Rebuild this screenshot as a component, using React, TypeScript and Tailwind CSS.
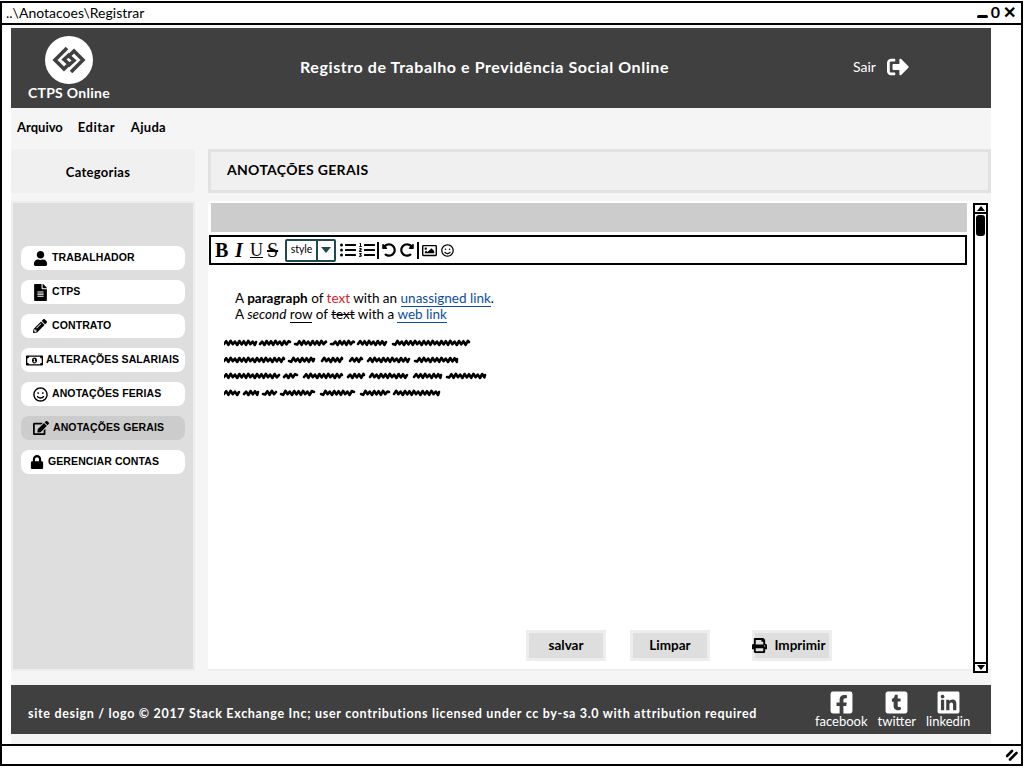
import {
  FaEdit,
  FaFacebookSquare,
  FaFileAlt,
  FaLinkedin,
  FaListOl,
  FaListUl,
  FaLock,
  FaPencilAlt,
  FaPrint,
  FaRedoAlt,
  FaRegImage,
  FaRegMoneyBillAlt,
  FaRegSmile,
  FaSignOutAlt,
  FaTumblrSquare,
  FaUndoAlt,
  FaUser,
} from "react-icons/fa";
import type { ReactNode } from "react";

const UI_FONT = "font-['Lato','Noto_Sans',sans-serif]";

const NAV_ITEMS: { label: string; icon: ReactNode; gap: string; pl: string; active?: boolean }[] = [
  { label: "TRABALHADOR", icon: <FaUser size={15} />, gap: "gap-[4px]", pl: "pl-[12px]" },
  { label: "CTPS", icon: <FaFileAlt size={17} />, gap: "gap-[3px]", pl: "pl-[11px]" },
  { label: "CONTRATO", icon: <FaPencilAlt size={14} />, gap: "gap-[5px]", pl: "pl-[12px]" },
  { label: "ALTERAÇÕES SALARIAIS", icon: <FaRegMoneyBillAlt size={17} />, gap: "gap-[3px]", pl: "pl-[5px]" },
  { label: "ANOTAÇÕES FERIAS", icon: <FaRegSmile size={15} />, gap: "gap-[4px]", pl: "pl-[12px]" },
  { label: "ANOTAÇÕES GERAIS", icon: <FaEdit size={16} />, gap: "gap-[4px]", pl: "pl-[12px]", active: true },
  { label: "GERENCIAR CONTAS", icon: <FaLock size={14} />, gap: "gap-[4px]", pl: "pl-[9px]" },
];

// word extents of the scribbled greeked text, in px from the left of the block
const SCRIBBLE_LINES = [
  [[0, 32], [36, 66], [71, 102], [107, 130], [134, 162], [169, 245]],
  [[0, 60], [65, 90], [98, 118], [126, 138], [144, 185], [191, 233]],
  [[0, 55], [60, 73], [80, 118], [124, 140], [146, 183], [190, 217], [223, 261]],
  [[0, 15], [20, 34], [39, 52], [57, 90], [97, 130], [137, 165], [170, 215]],
];

const SCRIBBLE_Y = [3.2, 6.8, 2.8, 6.2, 3.6, 7, 3, 6.4];

function zigzag(from: number, to: number) {
  let d = `M${from} 6`;
  let i = from;
  for (let x = from + 2.2; x < to; x += 2.2) {
    d += ` L${x.toFixed(1)} ${SCRIBBLE_Y[i % SCRIBBLE_Y.length]}`;
    i += 1;
  }
  return `${d} L${to} 4`;
}

function ScribbleLine({ words }: { words: number[][] }) {
  return (
    <svg width="270" height="10" className="block">
      {words.map(([a, b]) => (
        <path key={a} d={zigzag(a, b)} fill="none" stroke="#000" strokeWidth="2.6" strokeLinejoin="round" strokeLinecap="round" />
      ))}
    </svg>
  );
}

function Logo() {
  return (
    <div className="flex h-[48px] w-[48px] items-center justify-center rounded-full bg-white">
      <svg width="34" height="30" viewBox="0 0 34 30" fill="none" stroke="#404040" strokeWidth="3.6">
        <path d="M15 3 L3 15 L12 24 L17 19 L12 14.5 L18 9" />
        <path d="M19 27 L31 15 L22 6 L17 11 L22 15.5 L16 21" />
      </svg>
    </div>
  );
}

function SocialLink({ icon, label }: { icon: ReactNode; label: string }) {
  return (
    <div className="flex flex-col items-center text-white">
      {icon}
      <span className="mt-[-1px] text-[13px] leading-[15px]">{label}</span>
    </div>
  );
}

function ActionButton({ children, className }: { children: ReactNode; className: string }) {
  return (
    <button
      className={`flex h-[31px] items-center justify-center border-[3px] border-[#eeeeee] bg-[#dedede] text-[13.5px] font-bold text-black ${className}`}
    >
      {children}
    </button>
  );
}

function Toolbar() {
  return (
    <div className="flex h-[30px] items-center border-2 border-black bg-white pl-[4px]">
      <span className="w-[17px] font-['Liberation_Serif',serif] text-[20px] font-bold leading-none">B</span>
      <span className="w-[16px] pl-[3px] font-['Liberation_Serif',serif] text-[20px] font-bold italic leading-none">I</span>
      <span className="w-[18px] pl-[2px] font-['Liberation_Serif',serif] text-[18px] leading-none underline">U</span>
      <span className="w-[16px] pl-[1px] font-['Liberation_Serif',serif] text-[20px] leading-none line-through">S</span>
      <div className="ml-[3px] flex h-[23px] w-[51px] rounded-[2px] border-2 border-[#1f4a50] text-[10.5px]">
        <span className="flex w-[31px] items-center justify-center border-r-2 border-[#1f4a50]">style</span>
        <span className="flex flex-1 items-center justify-center">
          <span className="h-0 w-0 border-x-[5px] border-t-[6px] border-x-transparent border-t-[#1f4a50]" />
        </span>
      </div>
      <FaListUl size={16} className="ml-[4px]" />
      <FaListOl size={16} className="ml-[3px]" />
      <span className="ml-[2px] h-[17px] w-[2px] bg-black" />
      <FaUndoAlt size={14} className="ml-[3px]" />
      <FaRedoAlt size={14} className="ml-[4px]" />
      <span className="ml-[3px] h-[17px] w-[2px] bg-black" />
      <FaRegImage size={15} className="ml-[3px]" />
      <FaRegSmile size={13} className="ml-[4px]" />
    </div>
  );
}

function Scrollbar() {
  return (
    <div className="flex h-[470px] w-[15px] flex-col border-2 border-black bg-white">
      <div className="flex h-[9px] items-center justify-center border-b-2 border-black">
        <span className="h-0 w-0 border-x-[4px] border-b-[5px] border-x-transparent border-b-black" />
      </div>
      <div className="mx-auto mt-[1px] h-[21px] w-[9px] rounded-[3px] bg-black" />
      <div className="flex-1" />
      <div className="flex h-[9px] items-center justify-center border-t-2 border-black">
        <span className="h-0 w-0 border-x-[4px] border-t-[5px] border-x-transparent border-t-black" />
      </div>
    </div>
  );
}

export default function App() {
  return (
    <div className={`flex h-[768px] w-[1024px] flex-col overflow-hidden bg-white text-black ${UI_FONT}`}>
      <div className="mb-[2px] ml-0 mr-[1px] mt-[1px] flex flex-1 flex-col border-2 border-black">
        {/* Title bar */}
        <div className="flex h-[22px] shrink-0 items-center justify-between border-b-2 border-black pb-[2px] pl-[4px] pr-[5px] text-[14px]">
          <span>..\Anotacoes\Registrar</span>
          <span className="flex items-center gap-[3px] font-bold leading-none">
            <span className="mt-[8px] h-[3px] w-[11px] rounded-full bg-black" />
            <span className="text-[16px]">0</span>
            <span className="text-[16px]">✕</span>
          </span>
        </div>

        {/* Window body */}
        <div className="flex flex-1 bg-white">
          <div className="ml-[9px] flex w-[980px] flex-col bg-[#f5f5f5] pt-[3px]">
            <header className="flex h-[80px] shrink-0 items-center bg-[#404040] text-white">
              <div className="ml-[16px] flex w-[84px] flex-col items-center">
                <Logo />
                <span className="mt-[1px] text-[14px] font-bold leading-[16px] tracking-[0.3px]">CTPS Online</span>
              </div>
              <h1 className="ml-[189px] w-[368px] whitespace-nowrap pb-[2px] text-[16px] font-bold tracking-[0.58px]">
                Registro de Trabalho e Previdência Social Online
              </h1>
              <span className="ml-[185px] pb-[4px] text-[14px]">Sair</span>
              <FaSignOutAlt size={22} className="mb-[2px] ml-[11px]" />
            </header>

            <nav className="flex h-[41px] shrink-0 items-center gap-[15px] pb-[2px] pl-[6px] text-[13px] font-bold">
              <span>Arquivo</span>
              <span className="w-[38px] tracking-[0.5px]">Editar</span>
              <span className="tracking-[0.3px]">Ajuda</span>
            </nav>

            <div className="flex shrink-0 gap-[13px]">
              <div className="flex h-[44px] w-[184px] items-center justify-center rounded-[2px] bg-[#f0f0f0] pr-[10px] pt-[3px] text-[13px] font-bold tracking-[0.3px]">
                Categorias
              </div>
              <div className="flex h-[44px] flex-1 items-center border-[3px] border-[#e2e2e2] bg-[#f0f0f0] pb-[3px] pl-[16px] text-[14px] font-bold tracking-[0.3px]">
                ANOTAÇÕES GERAIS
              </div>
            </div>

            <div className="mt-[8px] flex shrink-0 gap-[13px]">
              {/* Sidebar */}
              <aside className="flex h-[470px] w-[184px] flex-col gap-[10px] border-[2px] border-[#eeeeee] bg-[#dedede] px-[8px] pt-[43px]">
                {NAV_ITEMS.map((item) => (
                  <div
                    key={item.label}
                    className={`flex h-[24px] w-[164px] items-center whitespace-nowrap rounded-[8px] font-['Liberation_Sans',sans-serif] text-[10.5px] font-bold tracking-[0.1px] ${item.gap} ${item.pl} ${item.active ? "bg-[#cccccc]" : "bg-white"}`}
                  >
                    {item.icon}
                    <span>{item.label}</span>
                  </div>
                ))}
              </aside>

              {/* Editor */}
              <section className="flex h-[470px] flex-1 gap-[6px] border-b-[2px] border-[#eeeeee] bg-white pl-[1px] pr-[3px] pt-[2px]">
                <div className="flex flex-1 flex-col">
                  <div className="ml-[2px] h-[29px] shrink-0 bg-[#cccccc]" />
                  <div className="mt-[3px]">
                    <Toolbar />
                  </div>
                  <div className="pl-[26px] pt-[25px] text-[13.5px] leading-[16px]">
                    <p>
                      A <b>paragraph</b> of <span className="text-[#d3222a]">text</span> with an{" "}
                      <span className="border-b border-[#0b4f9e] text-[#0b4f9e]">unassigned link</span>.
                    </p>
                    <p>
                      A <i>second</i> <span className="border-b border-black">row</span> of{" "}
                      <span className="line-through">text</span> with a{" "}
                      <span className="border-b border-[#0b4f9e] text-[#0b4f9e]">web link</span>
                    </p>
                  </div>
                  <div className="ml-[15px] mt-[16px] flex flex-col gap-[6.5px]">
                    {SCRIBBLE_LINES.map((words) => (
                      <ScribbleLine key={words[0][1] + words[1][1]} words={words} />
                    ))}
                  </div>
                  <div className="mb-[8px] mt-auto flex pl-[317px]">
                    <ActionButton className="w-[80px]">salvar</ActionButton>
                    <ActionButton className="ml-[24px] w-[80px]">Limpar</ActionButton>
                    <ActionButton className="ml-[42px] w-[80px] gap-[7px]">
                      <FaPrint size={15} className="ml-[-6px]" />
                      Imprimir
                    </ActionButton>
                  </div>
                </div>
                <Scrollbar />
              </section>
            </div>

            {/* Footer */}
            <footer className="mt-[14px] flex h-[49px] shrink-0 items-center bg-[#404040] pl-[17px] text-white">
              <span className="w-[787px] whitespace-nowrap pt-[10px] text-[12.5px] font-bold tracking-[0.68px]">
                site design / logo © 2017 Stack Exchange Inc; user contributions licensed under cc by-sa 3.0 with attribution required
              </span>
              <div className="flex gap-[10px]">
                <SocialLink icon={<FaFacebookSquare size={25} />} label="facebook" />
                <SocialLink icon={<FaTumblrSquare size={25} />} label="twitter" />
                <SocialLink icon={<FaLinkedin size={25} />} label="linkedin" />
              </div>
            </footer>
          </div>
        </div>

        {/* Status bar */}
        <div className="flex h-[20px] shrink-0 items-center justify-end border-t-2 border-black pr-[3px]">
          <svg width="12" height="12" viewBox="0 0 12 12" stroke="#000" strokeWidth="2.6" strokeLinecap="round">
            <path d="M1 7 L6 2 M4 10.5 L10.5 4" />
          </svg>
        </div>
      </div>
    </div>
  );
}
